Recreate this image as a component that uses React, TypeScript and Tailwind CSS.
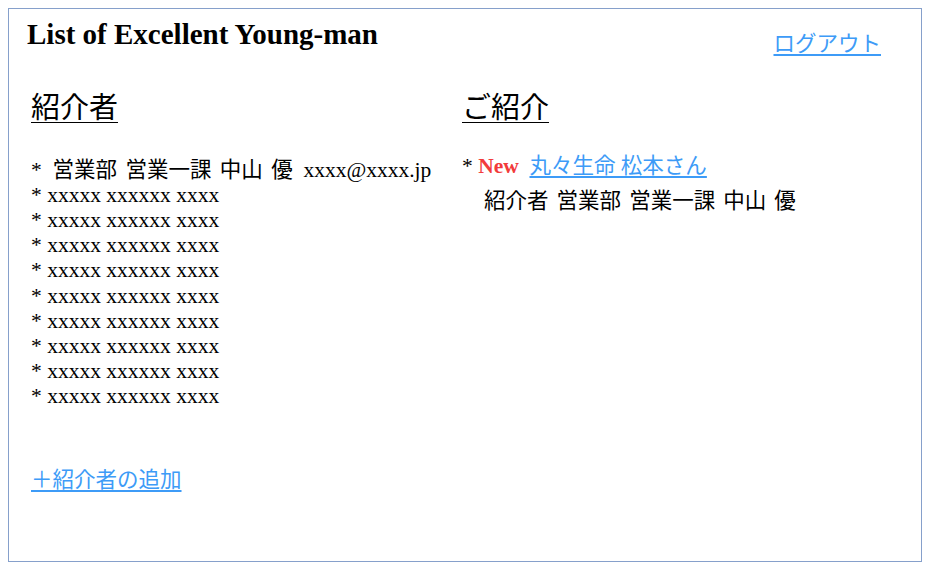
const serif = { fontFamily: '"Liberation Serif", "Noto Sans CJK JP", serif' };

const members = Array.from({ length: 9 }, () => 'xxxxx xxxxxx xxxx');

export default function App() {
    return (
        <div className="w-[932px] h-[570px] bg-white p-2 text-black" style={serif}>
            <div className="h-[554px] w-[914px] border border-[#86a0cb] flex flex-col pl-[22px] pr-[40px]">
                {/* Header */}
                <div className="flex justify-between items-start">
                    <h1 className="text-[29px] font-bold leading-none mt-[11px] -ml-[4px]">List of Excellent Young-man</h1>
                    <a href="#" className="text-[21.5px] leading-none mt-[25px] text-[#3d9bf7] underline underline-offset-[3px]">ログアウト</a>
                </div>

                <div className="flex mt-[38px]">
                    {/* Left: introducers */}
                    <div className="w-[431px] flex flex-col">
                        <h2 className="text-[29px] leading-none underline underline-offset-[4px] decoration-1 w-fit">紹介者</h2>
                        <ul className="mt-[35px] text-[21.5px] leading-[25.2px]">
                            <li>
                                *&nbsp; <span className="[word-spacing:3px]">営業部 営業一課 中山 優</span>&nbsp; xxxx@xxxx.jp
                            </li>
                            {members.map((m, i) => (
                                <li key={i}>* {m}</li>
                            ))}
                        </ul>
                        <a href="#" className="mt-[60px] text-[21.5px] leading-none text-[#3d9bf7] underline underline-offset-[3px] w-fit">＋紹介者の追加</a>
                    </div>

                    {/* Right: introductions */}
                    <div className="flex-1 flex flex-col">
                        <h2 className="text-[29px] leading-none underline underline-offset-[4px] decoration-1 w-fit">ご紹介</h2>
                        <div className="mt-[26px] text-[21.5px] leading-[35.5px]">
                            <div>
                                * <span className="font-bold text-[#f23b3b]">New</span>&nbsp;{' '}
                                <a href="#" className="text-[#3d9bf7] underline underline-offset-[3px]">丸々生命 松本さん</a>
                            </div>
                            <div className="pl-[22px] [word-spacing:2.7px]">紹介者 営業部 営業一課 中山 優</div>
                        </div>
                    </div>
                </div>
            </div>
        </div>
    );
}
